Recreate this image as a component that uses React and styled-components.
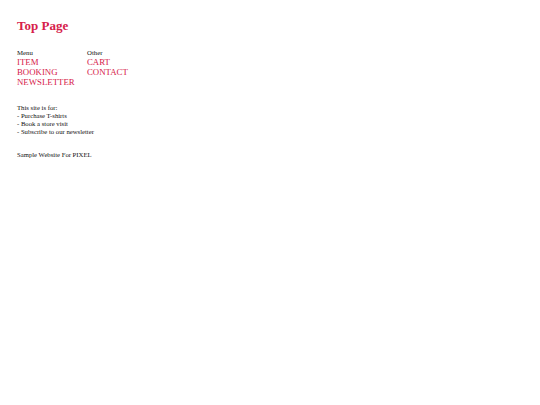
import React from "react";
import styled, { createGlobalStyle } from "styled-components";

const Global = createGlobalStyle`
  html, body { margin: 0; padding: 0; background: #fff; }
  body { font-family: "Liberation Serif", "Times New Roman", serif; color: #111; }
`;

const Page = styled.div`
  padding: 18px 17px;
`;

const Title = styled.h1`
  margin: 0;
  font-size: 13px;
  line-height: 15px;
  font-weight: bold;
  color: #d6204a;
`;

const Nav = styled.nav`
  display: flex;
  margin-top: 16px;
`;

const Column = styled.div`
  width: 70px;
  display: flex;
  flex-direction: column;
`;

const ColumnHead = styled.div`
  font-size: 6.8px;
  line-height: 8px;
`;

const NavLink = styled.a`
  font-size: 8.8px;
  line-height: 10px;
  color: #d6204a;
  text-decoration: none;
  white-space: nowrap;
`;

const Info = styled.div`
  margin-top: 17px;
  font-size: 6.7px;
  line-height: 8px;
`;

const Footer = styled.footer`
  margin-top: 15px;
  font-size: 6.7px;
  line-height: 8px;
`;

const columns = [
  { head: "Menu", links: ["ITEM", "BOOKING", "NEWSLETTER"] },
  { head: "Other", links: ["CART", "CONTACT"] },
];

export default function App() {
  return (
    <>
      <Global />
      <Page>
        <Title>Top Page</Title>
        <Nav>
          {columns.map((c) => (
            <Column key={c.head}>
              <ColumnHead>{c.head}</ColumnHead>
              {c.links.map((l) => (
                <NavLink key={l}>{l}</NavLink>
              ))}
            </Column>
          ))}
        </Nav>
        <Info>
          <div>This site is for:</div>
          <div>- Purchase T-shirts</div>
          <div>- Book a store visit</div>
          <div>- Subscribe to our newsletter</div>
        </Info>
        <Footer>Sample Website For PIXEL</Footer>
      </Page>
    </>
  );
}
